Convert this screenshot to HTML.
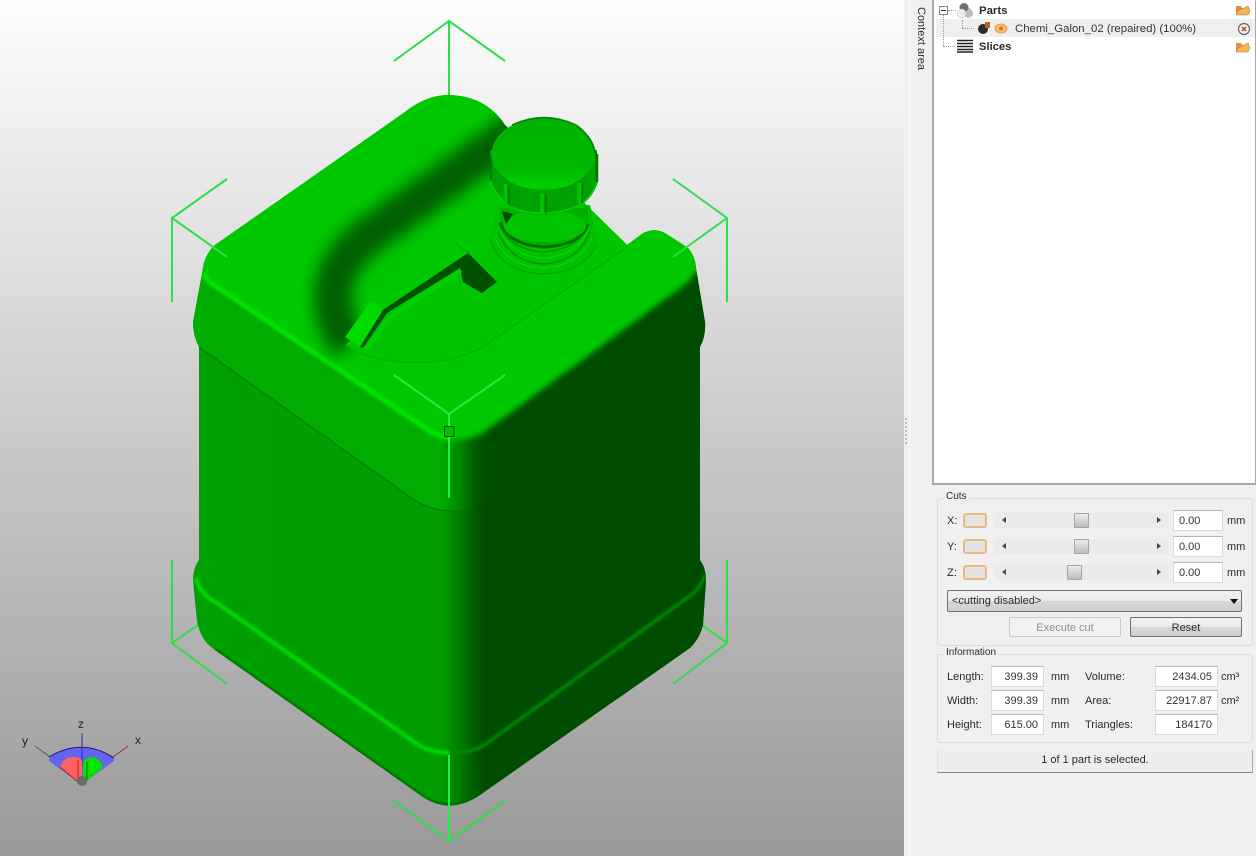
<!DOCTYPE html>
<html><head><meta charset="utf-8"><style>
html,body{margin:0;padding:0;width:1256px;height:856px;overflow:hidden;background:#f0f0f0;font-family:"Liberation Sans",sans-serif;font-size:11px;color:#2a2a2a}
.a{position:absolute}
#vp{left:0;top:0;width:904px;height:856px;background:linear-gradient(#fff 0,#fafafa 30px,#999 856px)}
.t{position:absolute;white-space:nowrap;line-height:14px}
.in{position:absolute;background:#fff;border:1px solid #dadada;border-top-color:#b4b4b4;height:19px;line-height:20px;text-align:right;padding-right:5px;color:#333}
.l{text-align:left;padding-left:5px;padding-right:0;width:43px}
.sl{position:absolute;left:995px;width:173px;height:15px;background:#ebebeb}
.th{position:absolute;width:15px;height:15px;background:linear-gradient(#ececec,#bdbdbd);border:1px solid #a4a4a4;border-radius:1px;box-sizing:border-box}
.sw{position:absolute;left:963px;width:20px;height:11px;background:#e2e2e2;border:2px solid #eeb878;border-radius:3px}
.la{position:absolute;width:0;height:0;border:3px solid transparent;border-right:4px solid #444;border-left:0}
.ra{position:absolute;width:0;height:0;border:3px solid transparent;border-left:4px solid #444;border-right:0}
.box{position:absolute;border:1px solid #dcdcdc;border-radius:3px}
</style></head><body>
<div id="vp" class="a"></div>
<svg class="a" style="left:0;top:0" width="904" height="856" viewBox="0 0 904 856">
<defs>
<linearGradient id="body" x1="0" x2="904" y1="0" y2="0" gradientUnits="userSpaceOnUse">
<stop offset=".22" stop-color="#00a000"/><stop offset=".488" stop-color="#009c00"/><stop offset=".5" stop-color="#008c00"/><stop offset=".525" stop-color="#005c00"/><stop offset=".535" stop-color="#004c00"/><stop offset="1" stop-color="#004c00"/></linearGradient>
<linearGradient id="sh" x1="0" x2="904" y1="0" y2="0" gradientUnits="userSpaceOnUse">
<stop offset=".22" stop-color="#00ac00"/><stop offset=".488" stop-color="#00ac00"/><stop offset=".5" stop-color="#009800"/><stop offset=".525" stop-color="#006000"/><stop offset=".54" stop-color="#004c00"/><stop offset="1" stop-color="#004c00"/></linearGradient>
<linearGradient id="ct" x1="0" x2="0" y1="118" y2="190" gradientUnits="userSpaceOnUse">
<stop offset="0" stop-color="#00b000"/><stop offset=".7" stop-color="#00b800"/><stop offset=".95" stop-color="#00d000"/><stop offset="1" stop-color="#00c000"/></linearGradient>
<filter id="b1" x="-20%" y="-20%" width="140%" height="140%"><feGaussianBlur stdDeviation="1.300"/></filter>
<filter id="b3" x="-20%" y="-20%" width="140%" height="140%"><feGaussianBlur stdDeviation="3"/></filter>
<filter id="b6" x="-30%" y="-30%" width="160%" height="160%"><feGaussianBlur stdDeviation="8"/></filter>
<clipPath id="jug"><path d="M215 245L405 112Q426 95 449 95Q486 96 505 125L627 245L642 234Q655 226 668 235L688 248Q695 256 696 268L705 322Q706 336 700 347L700 560Q706 568 706 580L703 625Q700 638 690 648L480 795Q449 816 420 795L215 650Q200 640 197 620L193 580Q193 568 199 560L199 347Q193 336 193 322L203 268Q205 254 215 245Z"/></clipPath>
</defs>

<path d="M172 560V643L227 684M172 643L198 625M727 560V643L673 684M727 643L702 625" stroke="#2fdc4a" stroke-width="2" fill="none"/>
<path d="M394 61L449 21L505 61M449 21V95" stroke="#2fdc4a" stroke-width="2" fill="none"/>
<path d="M394 801L449 841L505 801" stroke="#2fdc4a" stroke-width="2" fill="none"/>

<g clip-path="url(#jug)">
 <rect x="180" y="80" width="540" height="740" fill="url(#body)"/>
 <path d="M180 230H720V347L489 497Q470 511 449 511Q428 511 410 497L199 347L180 340Z" fill="url(#sh)"/>
 <path d="M199 347L410 497Q428 510 449 511Q458 511 466 508" stroke="#008000" stroke-width="1.200" fill="none"/>
 <!-- top plate -->
 <path d="M170 60H730V250L700 268L687 283L483 433Q465 442 449 440Q435 440 425 430L217 287L203 277L170 260Z" fill="#00c800" filter="url(#b3)"/>
 <path d="M200 60H600L700 230L690 262L470 412L425 418L210 268Z" fill="#00c800"/>
 <!-- left ridge -->
 <path d="M203 274Q208 282 217 287L427 429Q438 437 450 437" stroke="#00e400" stroke-width="5" fill="none" filter="url(#b1)"/>
 <!-- handle recess -->
 <path d="M520 128L370 235Q330 264 333 302Q336 328 350 345" stroke="#005e00" stroke-width="38" fill="none" filter="url(#b6)"/>
 <!-- floor -->
 <path d="M345 345L385 312L470 252L560 240L627 247L483 347Q450 367 405 362Q368 360 345 345Z" fill="#00c400"/>
 <path d="M345 345Q368 360 405 362Q450 365 483 347L627 247" stroke="#00b000" stroke-width="1.200" fill="none"/>
 <!-- lower band -->
 <path d="M180 570L197 590L217 603L420 748Q435 753 450 753Q468 753 483 747L687 598L704 585L720 570V700H180Z" fill="url(#body)"/>
 <path d="M196 578Q200 594 217 603L420 746Q435 753 450 753" stroke="#00dc00" stroke-width="4" fill="none" filter="url(#b1)"/>
 <path d="M450 753Q468 753 483 746L687 598Q700 590 705 575" stroke="#008a00" stroke-width="3.500" fill="none" filter="url(#b1)"/>
 <path d="M215 650L420 795Q449 816 480 795" stroke="#006000" stroke-width="3" fill="none" filter="url(#b1)"/>
</g>

<!-- recess details -->
<path d="M345 337L370 302L383 309L360 347Z" fill="#00dc00"/>
<path d="M360 347L383 310L468 253L497 282L482 293L463 282L460 268L387 313L363 348Z" fill="#005000"/>
<path d="M364 349L387 317L460 269L462 272L390 320L368 350Z" fill="#00d000"/>
<path d="M455 243L468 253" stroke="#00a800" fill="none"/>

<!-- neck -->
<path d="M490 235Q490 270 543 274Q597 270 597 238L590 205H498Z" fill="#00c000"/>
<path d="M490 240Q500 272 543 274Q586 272 597 243" stroke="#00a600" stroke-width="1.200" fill="none"/>
<path d="M495 238Q506 266 543 268Q580 266 592 238" stroke="#00e000" stroke-width="1" fill="none"/>
<path d="M498 232Q510 262 543 264Q578 262 590 232" stroke="#009000" stroke-width="1.200" fill="none"/>
<path d="M499 228Q510 256 543 258Q578 256 589 228" stroke="#00e000" stroke-width="1" fill="none"/>
<path d="M499 224Q510 250 543 252Q578 250 589 224" stroke="#009000" stroke-width="1.200" fill="none"/>
<path d="M500 210V224Q505 246 544 247Q584 246 588 224V208H500Z" fill="#00b000"/>
<path d="M500 222Q508 245 544 247Q582 245 588 224" stroke="#007000" stroke-width="3" fill="none"/>
<ellipse cx="545" cy="226" rx="41" ry="16" fill="#00c400"/>
<path d="M502 211L506 224L513 214Z" fill="#004c00"/>
<!-- cap -->
<path d="M490 150V178Q496 198 510 208Q543 222 578 207Q594 198 597 178V150Z" fill="#00a000"/>
<path d="M490 182Q498 198 510 207Q543 220 578 206Q592 198 597 182" stroke="#00cc00" stroke-width="2" fill="none"/>
<path d="M491 156V180M597 154V182" stroke="#007800" stroke-width="2.500" fill="none"/>
<path d="M505.500 184V205M542 193V213M579 183V203" stroke="#00c400" stroke-width="3.500" fill="none"/>
<path d="M509 186V205M546 195V214M582.500 185V203" stroke="#007000" stroke-width="1.200" fill="none"/>
<ellipse cx="543.500" cy="154" rx="52" ry="36" fill="url(#ct)"/>
<path d="M512 125Q544 110 576 125Q592 136 595.500 154" stroke="#008000" stroke-width="1.500" fill="none"/>

<!-- over-jug selection lines -->
<path d="M227 179L172 218L227 257M172 218V302M673 179L727 218L673 257M727 218V302" stroke="#2fdc4a" stroke-width="2" fill="none"/>
<path d="M394 375L449 414L505 375M449 414V498M449 755V841" stroke="#22ee44" stroke-width="2" fill="none"/>
<rect x="444.500" y="426.500" width="9.500" height="10" fill="#00c000" stroke="#005800"/>

<!-- axes -->
<path d="M35 746L50 757" stroke="#2d6a2d"/><path d="M128 746L113 757" stroke="#a03050"/>
<path d="M49 757Q82 737 114 758L114 761L85 782L78 782L49 761Z" fill="#6464ee"/>
<path d="M49 757Q82 737 114 758" stroke="#1a1a80" fill="none"/>
<path d="M82 733V765" stroke="#2b2bb0"/>
<path d="M60 767Q64 757 72 757Q80 757 82 761V780L78 782Z" fill="#ff6262"/>
<path d="M83 762Q88 757 92 757Q100 758 103 767L86 782L83 780Z" fill="#00e400"/>
<path d="M60 767L78 782M78 760V780" stroke="#b02020" fill="none"/><path d="M87 762V780" stroke="#007000"/>
<circle cx="82" cy="781" r="5" fill="#6a6a6a"/>
<text x="78" y="728" font-size="12" fill="#222" font-family="Liberation Sans">z</text>
<text x="22" y="745" font-size="12" fill="#222" font-family="Liberation Sans">y</text>
<text x="135" y="744" font-size="12" fill="#222" font-family="Liberation Sans">x</text>
</svg>

<!-- sidebar -->
<div class="a" style="left:904px;top:0;width:352px;height:856px;background:#f0f0f0"></div>
<div class="a" style="left:905px;top:418px;width:3px;height:26px;border-left:2px dotted #bbb"></div>
<div class="a" style="left:909px;top:0;width:1px;height:856px;background:#fafafa"></div>
<div class="t" style="left:914px;top:7px;width:14px;height:64px;writing-mode:vertical-rl;font-size:11px;line-height:14px">Context area</div>
<div class="a" style="left:932px;top:-1px;width:321px;height:483px;background:#fff;border:1px solid #a8a8a8;border-left:2px solid #a8a8a8;border-bottom:2px solid #a8a8a8"></div>
<div class="a" style="left:936px;top:19px;width:319px;height:18px;background:#efefef"></div>
<div class="a" style="left:939px;top:6px;width:7px;height:7px;border:1px solid #888;background:#fff"></div>
<div class="a" style="left:941px;top:10px;width:5px;height:1px;background:#333"></div>
<div class="a" style="left:943px;top:15px;height:31px;border-left:1px dotted #999"></div>
<div class="a" style="left:943px;top:46px;width:12px;border-top:1px dotted #999"></div>
<div class="a" style="left:948px;top:10px;width:8px;border-top:1px dotted #999"></div>
<div class="a" style="left:962px;top:20px;height:8px;border-left:1px dotted #999"></div>
<div class="a" style="left:962px;top:28px;width:12px;border-top:1px dotted #999"></div>
<svg class="a" style="left:956px;top:1px" width="20" height="18"><circle cx="12" cy="12" r="5" fill="#bdbdbd"/><circle cx="8" cy="6.500" r="4.500" fill="#6e6e6e"/><circle cx="5.500" cy="12.500" r="4.500" fill="#ececec" stroke="#bbb" stroke-width=".5"/></svg>
<div class="t" style="left:979px;top:4px;font-weight:bold;font-size:11.400px">Parts</div>
<svg class="a" style="left:977px;top:20px" width="32" height="16"><circle cx="6" cy="9" r="5" fill="#2a2a2a"/><rect x="8" y="2" width="5" height="6" fill="#b8641c"/><ellipse cx="24" cy="8.500" rx="6" ry="4.500" fill="#f3c078" stroke="#e89a40"/><circle cx="24" cy="8.500" r="2" fill="#d87a20"/></svg>
<div class="t" style="left:1015px;top:22px;font-size:11.400px;color:#333">Chemi_Galon_02 (repaired) (100%)</div>
<svg class="a" style="left:956px;top:39px" width="18" height="14"><path d="M1 1.500H17M1 4.500H17M1 7.500H17M1 10.500H17M1 13H17" stroke="#222" stroke-width="1.400"/></svg>
<div class="t" style="left:979px;top:40px;font-weight:bold;font-size:11.200px">Slices</div>
<svg class="a" style="left:1235px;top:3px" width="16" height="14"><path d="M1 3H6L7 5H13V12H1Z" fill="#e0903a"/><path d="M3 8L13 3L15 8L13 12H1Z" fill="#f3b55c" stroke="#b87028" stroke-width=".5"/></svg>
<svg class="a" style="left:1235px;top:40px" width="16" height="14"><path d="M1 3H6L7 5H13V12H1Z" fill="#e0903a"/><path d="M3 8L13 3L15 8L13 12H1Z" fill="#f3b55c" stroke="#b87028" stroke-width=".5"/></svg>
<svg class="a" style="left:1237px;top:22px" width="14" height="14"><circle cx="7" cy="7" r="5.500" fill="#eee" stroke="#666" stroke-width="1.200"/><path d="M5 5L9 9M9 5L5 9" stroke="#c8441c" stroke-width="1.500"/></svg>

<!-- Cuts -->
<div class="box" style="left:937px;top:498px;width:314px;height:146px"></div>
<div class="t" style="left:944px;top:490px;background:#f0f0f0;padding:0 2px;font-size:10px">Cuts</div>
<div class="t" style="left:947px;top:514px">X:</div><div class="t" style="left:947px;top:540px">Y:</div><div class="t" style="left:947px;top:566px">Z:</div>
<div class="sw" style="top:513px"></div><div class="sw" style="top:539px"></div><div class="sw" style="top:565px"></div>
<div class="sl" style="top:513px"></div><div class="sl" style="top:539px"></div><div class="sl" style="top:565px"></div>
<div class="la" style="left:1002px;top:517px"></div><div class="ra" style="left:1157px;top:517px"></div>
<div class="la" style="left:1002px;top:543px"></div><div class="ra" style="left:1157px;top:543px"></div>
<div class="la" style="left:1002px;top:569px"></div><div class="ra" style="left:1157px;top:569px"></div>
<div class="th" style="left:1074px;top:513px"></div><div class="th" style="left:1074px;top:539px"></div><div class="th" style="left:1067px;top:565px"></div>
<div class="in l" style="left:1173px;top:510px">0.00</div>
<div class="in l" style="left:1173px;top:536px">0.00</div>
<div class="in l" style="left:1173px;top:562px">0.00</div>
<div class="t" style="left:1227px;top:514px">mm</div><div class="t" style="left:1227px;top:540px">mm</div><div class="t" style="left:1227px;top:566px">mm</div>
<div class="a" style="left:947px;top:590px;width:293px;height:20px;border:1px solid #707070;border-radius:2px;background:linear-gradient(#f2f2f2 0,#ebebeb 50%,#d8d8d8 51%,#cfcfcf);line-height:21px;text-indent:4px">&lt;cutting disabled&gt;</div>
<div class="a" style="left:1230px;top:599px;border:4px solid transparent;border-top:5px solid #111;width:0;height:0"></div>
<div class="a" style="left:1009px;top:617px;width:110px;height:18px;border:1px solid #c8c8c8;border-radius:2px;background:#f2f2f2;color:#909090;text-align:center;line-height:20px">Execute cut</div>
<div class="a" style="left:1130px;top:617px;width:110px;height:18px;border:1px solid #707070;border-radius:2px;background:linear-gradient(#f2f2f2 0,#ebebeb 50%,#d8d8d8 51%,#cfcfcf);text-align:center;line-height:20px">Reset</div>

<!-- Information -->
<div class="box" style="left:937px;top:654px;width:314px;height:87px"></div>
<div class="t" style="left:944px;top:646px;background:#f0f0f0;padding:0 2px;font-size:10px">Information</div>
<div class="t" style="left:947px;top:670px">Length:</div><div class="t" style="left:947px;top:694px">Width:</div><div class="t" style="left:947px;top:718px">Height:</div>
<div class="in" style="left:991px;top:666px;width:46px">399.39</div><div class="in" style="left:991px;top:690px;width:46px">399.39</div><div class="in" style="left:991px;top:714px;width:46px">615.00</div>
<div class="t" style="left:1051px;top:670px">mm</div><div class="t" style="left:1051px;top:694px">mm</div><div class="t" style="left:1051px;top:718px">mm</div>
<div class="t" style="left:1085px;top:670px">Volume:</div><div class="t" style="left:1085px;top:694px">Area:</div><div class="t" style="left:1085px;top:718px">Triangles:</div>
<div class="in" style="left:1155px;top:666px;width:56px">2434.05</div><div class="in" style="left:1155px;top:690px;width:56px">22917.87</div><div class="in" style="left:1155px;top:714px;width:56px">184170</div>
<div class="t" style="left:1221px;top:670px">cm³</div><div class="t" style="left:1221px;top:694px">cm²</div>
<div class="a" style="left:937px;top:750px;width:314px;height:22px;background:#eeeeee;border-bottom:1px solid #888;border-right:1px solid #aaa;border-left:1px solid #e0e0e0;text-align:center;line-height:21px">1 of 1 part is selected.</div>
</body></html>
